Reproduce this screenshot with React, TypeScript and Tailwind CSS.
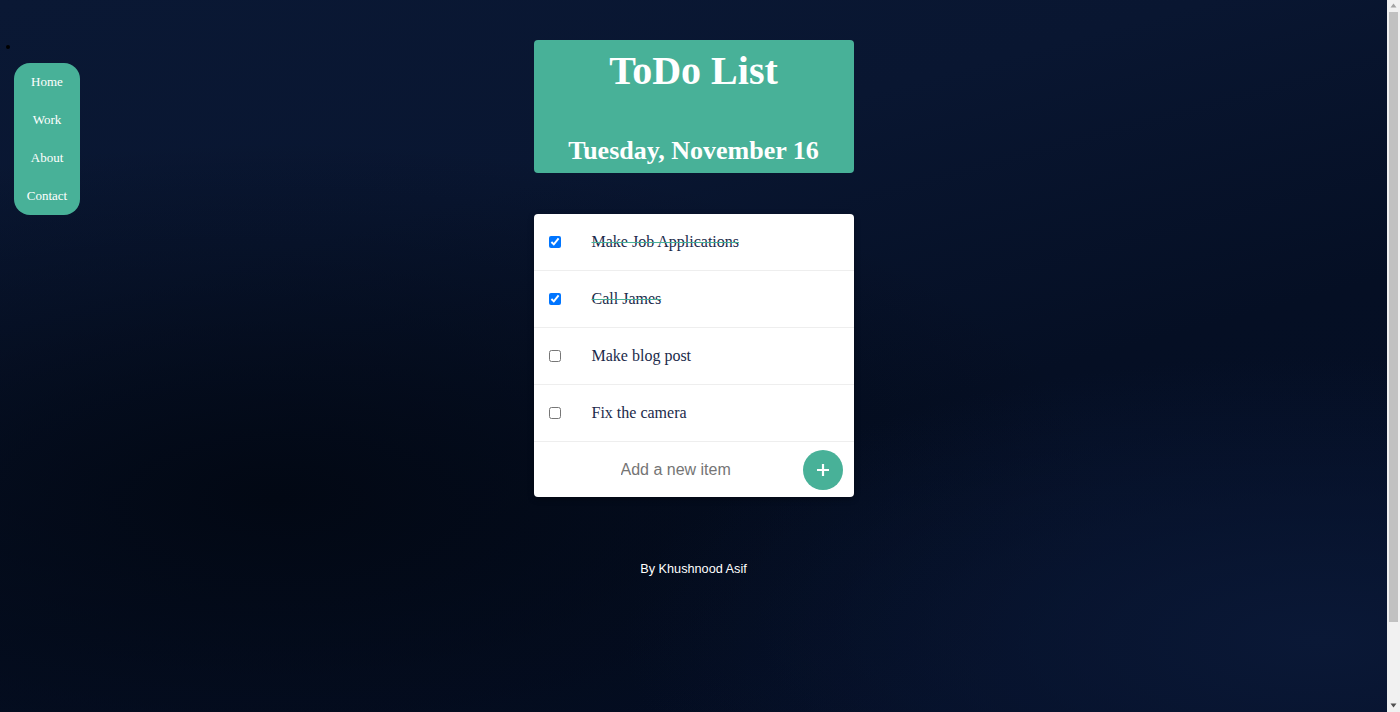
import React from "react";

const items = [
  { t: "Make Job Applications", done: true },
  { t: "Call James", done: true },
  { t: "Make blog post", done: false },
  { t: "Fix the camera", done: false },
];

function Scrollbar() {
  return (
    <div className="flex h-full w-[13px] shrink-0 flex-col items-center bg-[#f1f1f1] pt-[3px]">
      <svg width="7" height="5" viewBox="0 0 7 5" className="shrink-0">
        <path d="M3.5 0.5L6.5 4.5H0.5Z" fill="#a3a3a3" />
      </svg>
      <div className="mt-[4px] h-[610px] w-[9px] shrink-0 bg-[#c1c1c1]" />
      <div className="flex-1" />
      <svg width="7" height="5" viewBox="0 0 7 5" className="mb-[4px] shrink-0">
        <path d="M3.5 4.5L6.5 0.5H0.5Z" fill="#505050" />
      </svg>
    </div>
  );
}

export default function App() {
  return (
    <div className="flex h-screen w-full overflow-hidden">
      <div className="relative h-full flex-1 bg-[radial-gradient(ellipse_50%_40%_at_95%_90%,#0a1836_0%,transparent_100%),radial-gradient(ellipse_60%_50%_at_20%_70%,#020814_0%,transparent_100%),linear-gradient(165deg,#0a1834_0%,#091631_30%,#050f24_60%,#040e26_100%)] font-['Liberation_Serif',serif]">
        <div className="absolute left-[6px] top-[45px] h-[4px] w-[4px] rounded-full bg-black" />
        <nav className="absolute left-[14px] top-[63px] flex w-[66px] flex-col rounded-[16px] bg-[#48b198]">
          {["Home", "Work", "About", "Contact"].map((n) => (
            <a key={n} href="#" className="flex h-[38px] items-center justify-center text-[13px] text-white">
              {n}
            </a>
          ))}
        </nav>

        <main className="flex flex-col items-center pt-[40px]">
          <header className="flex h-[133px] w-[320px] flex-col items-center rounded-[4px] bg-[#48b198] text-white">
            <h1 className="mt-[11px] text-[40px] font-bold leading-[40px]">ToDo List</h1>
            <h2 className="mt-[46px] text-[26px] font-bold leading-[28px]">Tuesday, November 16</h2>
          </header>

          <section className="mt-[41px] w-[320px] overflow-hidden rounded-[4px] bg-white shadow-[0_2px_6px_rgba(0,0,0,0.3)]">
            {items.map((it) => (
              <div key={it.t} className="flex h-[57px] items-center border-b border-[#eeeeee]">
                <input
                  type="checkbox"
                  defaultChecked={it.done}
                  className="ml-[15px] mr-[1px] h-[12px] w-[12px] accent-[#0075ff]"
                />
                <span
                  className={
                    "ml-[30px] text-[16px] text-[#1b2a4a] " +
                    (it.done ? "line-through decoration-[#48b198]" : "")
                  }
                >
                  {it.t}
                </span>
              </div>
            ))}
            <div className="flex h-[55px] items-center">
              <input
                type="text"
                placeholder="Add a new item"
                className="min-w-0 flex-1 bg-transparent pl-[87px] font-['Liberation_Sans',Arial,sans-serif] text-[16px] text-[#333] outline-none placeholder:text-[#757575]"
              />
              <button className="mr-[11px] flex h-[40px] w-[40px] items-center justify-center rounded-full bg-[#48b198]">
                <svg width="14" height="14" viewBox="0 0 14 14">
                  <path d="M7 1v12M1 7h12" stroke="white" strokeWidth="2.2" />
                </svg>
              </button>
            </div>
          </section>

          <footer className="mt-[65px] font-['Liberation_Sans',Arial,sans-serif] text-[12.7px] leading-[15px] text-white">
            By Khushnood Asif
          </footer>
        </main>
      </div>
      <Scrollbar />
    </div>
  );
}
